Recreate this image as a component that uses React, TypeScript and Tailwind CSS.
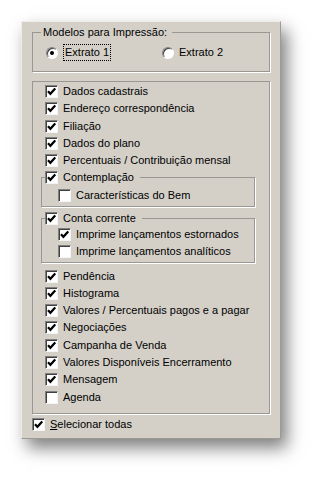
import React from "react";

function Check({ checked }: { checked: boolean }) {
  return (
    <span className="inline-flex h-[13px] w-[13px] shrink-0 items-center justify-center border border-t-[#808080] border-l-[#808080] border-r-[#f4f4f4] border-b-[#f4f4f4] bg-white shadow-[inset_1px_1px_0_#404040]">
      {checked && (
        <svg width="9" height="9" viewBox="0 0 9 9">
          <path d="M1 4.2 L3.4 6.8 L8.2 1.4" fill="none" stroke="#000" strokeWidth="2.2" />
        </svg>
      )}
    </span>
  );
}

function Radio({ checked }: { checked: boolean }) {
  return (
    <span className="inline-flex h-[12px] w-[12px] shrink-0 items-center justify-center rounded-full border border-t-[#808080] border-l-[#808080] border-r-white border-b-white bg-white shadow-[inset_1px_1px_0_#404040]">
      {checked && <span className="h-[4px] w-[4px] rounded-full bg-black" />}
    </span>
  );
}

function Row({ label, checked = true }: { label: string; checked?: boolean }) {
  return (
    <div className="flex h-[17.3px] items-center gap-[5px]">
      <Check checked={checked} />
      <span>{label}</span>
    </div>
  );
}

export default function App() {
  return (
    <div className="min-h-screen bg-white pl-[21px] pt-[21px] text-[11px] leading-none text-black" style={{ fontFamily: '"Liberation Sans", Arial, sans-serif' }}>
      <div className="flex h-[418px] w-[260px] flex-col border border-t-[#efede8] border-l-[#efede8] border-r-[#9c9a95] border-b-[#9c9a95] bg-[#d4d0c8] px-[10px] pt-[5px] shadow-[6px_9px_16px_rgba(0,0,0,0.5)]">
        <fieldset className="h-[45px] border border-[#9a9893] pl-[8px] shadow-[1px_1px_0_#fff]">
          <legend className="px-[2px] pr-[5px]">Modelos para Impressão:</legend>
          <div className="flex h-[29px] items-center">
            <div className="flex w-[121px] items-center gap-[5px] pl-[5px]">
              <Radio checked />
              <span className="border border-dotted border-black px-[1px] py-[2px]">Extrato 1</span>
            </div>
            <div className="flex items-center gap-[5px]">
              <Radio checked={false} />
              <span>Extrato 2</span>
            </div>
          </div>
        </fieldset>

        <div className="mt-[9px] flex h-[333px] flex-col border border-[#9a9893] pl-[12px] pt-[1px] shadow-[1px_1px_0_#fff]">
          <Row label="Dados cadastrais" />
          <Row label="Endereço correspondência" />
          <Row label="Filiação" />
          <Row label="Dados do plano" />
          <Row label="Percentuais / Contribuição mensal" />

          <fieldset className="-ml-[4px] mr-[14px] border border-[#9a9893] pl-[3px] shadow-[1px_1px_0_#fff]">
            <legend className="pr-[6px]">
              <span className="flex h-[17px] items-center gap-[5px]">
                <Check checked />
                <span>Contemplação</span>
              </span>
            </legend>
            <div className="pb-[2px] pl-[13px]">
              <Row label="Características do Bem" checked={false} />
            </div>
          </fieldset>

          <fieldset className="-ml-[4px] mr-[14px] mt-[3px] border border-[#9a9893] pl-[3px] shadow-[1px_1px_0_#fff]">
            <legend className="pr-[6px]">
              <span className="flex h-[17px] items-center gap-[5px]">
                <Check checked />
                <span>Conta corrente</span>
              </span>
            </legend>
            <div className="-mt-[1px] pb-[2px] pl-[13px]">
              <Row label="Imprime lançamentos estornados" />
              <Row label="Imprime lançamentos analíticos" checked={false} />
            </div>
          </fieldset>

          <div className="mt-[4px]">
            <Row label="Pendência" />
            <Row label="Histograma" />
            <Row label="Valores / Percentuais pagos e a pagar" />
            <Row label="Negociações" />
            <Row label="Campanha de Venda" />
            <Row label="Valores Disponíveis Encerramento" />
            <Row label="Mensagem" />
            <Row label="Agenda" checked={false} />
          </div>
        </div>

        <div className="mt-[2px] flex h-[17px] items-center gap-[5px]">
          <Check checked />
          <span>
            <span className="underline">S</span>elecionar todas
          </span>
        </div>
      </div>
    </div>
  );
}
